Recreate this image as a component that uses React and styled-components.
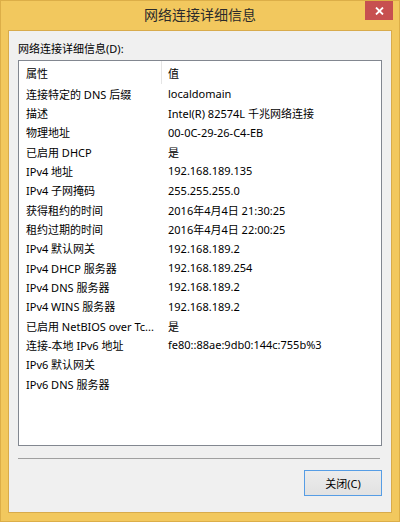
import React from 'react';
import styled, { createGlobalStyle } from 'styled-components';

const GlobalStyle = createGlobalStyle`
  html, body {
    margin: 0;
    padding: 0;
    background: #ffffff;
  }
  * {
    box-sizing: border-box;
  }
`;

const Window = styled.div`
  width: 400px;
  height: 522px;
  display: flex;
  flex-direction: column;
  background-color: #f2c85e;
  border: 1px solid #dcae48;
  padding: 0 7px 8px;
  font-family: 'Noto Sans', 'Noto Sans CJK SC', sans-serif;
  color: #000;
`;

const TitleBar = styled.div`
  height: 29px;
  display: grid;
  grid-template-columns: 1fr auto 1fr;
  align-items: start;
  margin: 0 -7px;
`;

const Title = styled.div`
  grid-column: 2;
  font-size: 14px;
  line-height: 28px;
  color: #2b2b2b;
`;

const CloseButton = styled.button`
  grid-column: 3;
  justify-self: end;
  margin-right: 6px;
  width: 28px;
  height: 19px;
  border: none;
  padding: 0;
  background-color: #c75050;
  display: flex;
  align-items: center;
  justify-content: center;
`;

const Content = styled.div`
  flex: 1;
  display: flex;
  flex-direction: column;
  background-color: #f0f0f0;
  border: 1px solid #d8ab4c;
  padding: 10px 9px 0;
`;

const Label = styled.div`
  font-size: 11px;
  line-height: 16px;
  margin-bottom: 3px;
`;

const ListBox = styled.div`
  height: 386px;
  background-color: #fff;
  border: 1px solid #828790;
  font-size: 11px;
`;

const Header = styled.div`
  height: 23px;
  display: flex;
  align-items: center;
`;

const Row = styled.div`
  height: 19.33px;
  display: flex;
  align-items: center;
  white-space: nowrap;
`;

const NameCell = styled.div`
  width: 143px;
  padding-left: 7px;
  height: 100%;
  display: flex;
  align-items: center;
  border-right: ${(p) => (p.$header ? '1px solid #e5e5e5' : 'none')};
`;

const ValueCell = styled.div`
  padding-left: 6px;
`;

const Separator = styled.div`
  height: 1px;
  background-color: #a0a0a0;
  margin: 12px 2px 0 0;
`;

const Button = styled.button`
  align-self: flex-end;
  margin-top: 11px;
  width: 78px;
  height: 26px;
  border: 1px solid #569de5;
  background: linear-gradient(#ececec, #e2e2e2);
  font-family: 'Noto Sans', 'Noto Sans CJK SC', sans-serif;
  font-size: 11px;
  color: #000;
  padding: 0;
`;

const rows = [
  ['连接特定的 DNS 后缀', 'localdomain'],
  ['描述', 'Intel(R) 82574L 千兆网络连接'],
  ['物理地址', '00-0C-29-26-C4-EB'],
  ['已启用 DHCP', '是'],
  ['IPv4 地址', '192.168.189.135'],
  ['IPv4 子网掩码', '255.255.255.0'],
  ['获得租约的时间', '2016年4月4日 21:30:25'],
  ['租约过期的时间', '2016年4月4日 22:00:25'],
  ['IPv4 默认网关', '192.168.189.2'],
  ['IPv4 DHCP 服务器', '192.168.189.254'],
  ['IPv4 DNS 服务器', '192.168.189.2'],
  ['IPv4 WINS 服务器', '192.168.189.2'],
  ['已启用 NetBIOS over Tc...', '是'],
  ['连接-本地 IPv6 地址', 'fe80::88ae:9db0:144c:755b%3'],
  ['IPv6 默认网关', ''],
  ['IPv6 DNS 服务器', ''],
];

const App = () => {
  return (
    <>
      <GlobalStyle />
      <Window>
        <TitleBar>
          <Title>网络连接详细信息</Title>
          <CloseButton aria-label="关闭">
            <svg width="9" height="8" viewBox="0 0 9 8">
              <path d="M1 0.5 L8 7.5 M8 0.5 L1 7.5" stroke="#fff" strokeWidth="1.8" />
            </svg>
          </CloseButton>
        </TitleBar>
        <Content>
          <Label>网络连接详细信息(D):</Label>
          <ListBox>
            <Header>
              <NameCell $header>属性</NameCell>
              <ValueCell>值</ValueCell>
            </Header>
            {rows.map(([name, value]) => (
              <Row key={name}>
                <NameCell>{name}</NameCell>
                <ValueCell>{value}</ValueCell>
              </Row>
            ))}
          </ListBox>
          <Separator />
          <Button>关闭(C)</Button>
        </Content>
      </Window>
    </>
  );
};

export default App;
